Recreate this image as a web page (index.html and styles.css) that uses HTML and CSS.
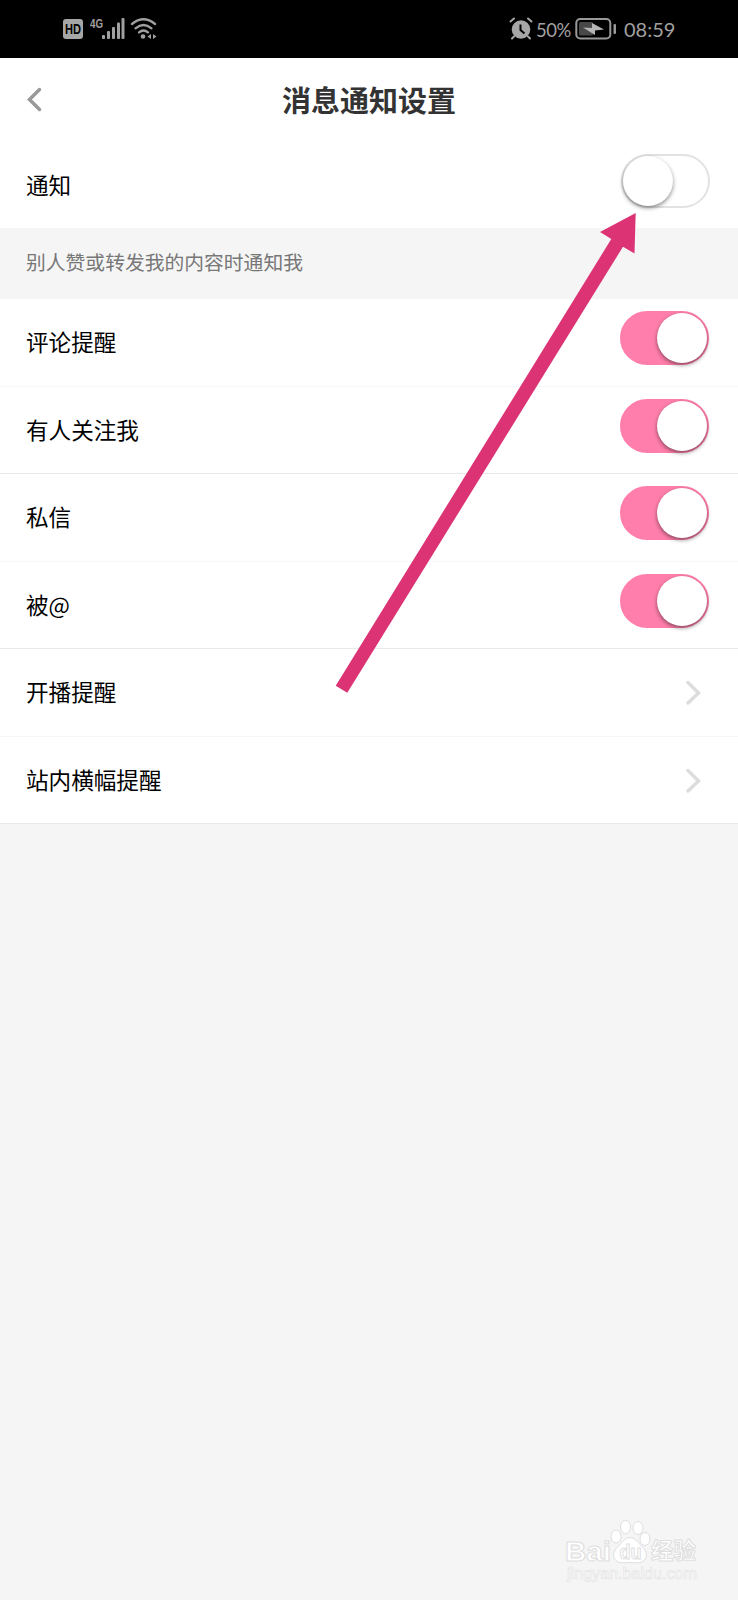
FILE: index.html
```html
<!DOCTYPE html>
<html lang="zh-CN">
<head>
<meta charset="utf-8">
<meta name="viewport" content="width=device-width, initial-scale=1">
<title>消息通知设置</title>
<link rel="stylesheet" href="styles.css">
</head>
<body>

<div class="statusbar">
  <svg class="signal" width="106" height="30" viewBox="60 14 106 30">
    <rect x="63" y="19" width="20" height="20" rx="3" fill="#a6a6a6"/>
    <text x="73" y="34.3" class="hd" text-anchor="middle" textLength="16" lengthAdjust="spacingAndGlyphs">HD</text>
    <text x="90" y="27.5" class="net" textLength="13" lengthAdjust="spacingAndGlyphs">4G</text>
    <g fill="#a0a0a0">
      <rect x="102" y="35" width="3" height="4" rx="1"/>
      <rect x="107" y="31" width="3" height="8" rx="1"/>
      <rect x="112" y="27" width="3" height="12" rx="1"/>
      <rect x="117" y="22.500" width="3" height="16.500" rx="1"/>
      <rect x="121.500" y="18" width="3" height="21" rx="1"/>
      <circle cx="143" cy="36.500" r="2.300"/>
      <path d="M151 34v5l-3.500-2.500zM153 34v5l3.500-2.500z"/>
    </g>
    <g fill="none" stroke="#a0a0a0" stroke-width="2.300" stroke-linecap="round">
      <path d="M132 24Q143.500 14.500 155 24"/>
      <path d="M135.500 28.300Q143.500 21.700 151.500 28.300"/>
      <path d="M139 32.300Q143.500 28.700 148 32.300"/>
    </g>
  </svg>
  <div class="status-right">
    <svg width="24" height="24" viewBox="0 0 24 24">
      <circle cx="12" cy="12.500" r="9.300" fill="#a6a6a6"/>
      <g fill="none" stroke="#a6a6a6" stroke-width="2" stroke-linecap="round">
        <path d="M1.500 4.500L5 1.500M19 1.500l3.500 3M5 19.500l-2 2M19 19.500l2 2"/>
      </g>
      <path d="M11.500 7.500v5.500l4 3.500" fill="none" stroke="#000" stroke-width="2"/>
    </svg>
    <span class="percent">50%</span>
    <svg class="battery" width="42" height="24" viewBox="0 0 42 24">
      <rect x="1.300" y="2" width="34" height="19.500" rx="4" fill="none" stroke="#999" stroke-width="2"/>
      <rect x="4" y="5" width="14" height="13.500" rx="1.500" fill="#484848"/>
      <path d="M8 10.500l9 .5V6l12 6.500-9 1v4.500z" fill="#b5b5b5"/>
      <rect x="38.500" y="7" width="2.500" height="10" rx="1" fill="#999"/>
    </svg>
    <span class="clock">08:59</span>
  </div>
</div>

<div class="header">
  <svg class="back" width="16" height="26" viewBox="0 0 16 26">
    <path d="M13.500 2.500L3.500 12.500l10 10"/>
  </svg>
  <h1>消息通知设置</h1>
</div>

<div class="row first">
  <span>通知</span>
  <div class="switch"></div>
</div>

<div class="hint">别人赞或转发我的内容时通知我</div>

<div class="list">
  <div class="row">
    <span>评论提醒</span>
    <div class="switch on"></div>
  </div>
  <div class="row dark-line">
    <span>有人关注我</span>
    <div class="switch on"></div>
  </div>
  <div class="row">
    <span>私信</span>
    <div class="switch on"></div>
  </div>
  <div class="row dark-line">
    <span>被@</span>
    <div class="switch on"></div>
  </div>
  <div class="row">
    <span>开播提醒</span>
    <svg class="more" width="16" height="26" viewBox="0 0 16 26"><path d="M3 3.500l10.500 10.500L3 24"/></svg>
  </div>
  <div class="row dark-line">
    <span>站内横幅提醒</span>
    <svg class="more" width="16" height="26" viewBox="0 0 16 26"><path d="M3 3.500l10.500 10.500L3 24"/></svg>
  </div>
</div>

<!-- arrow pointing at the first switch -->
<svg class="arrow" width="310" height="490" viewBox="330 208 310 490">
  <path d="M635.700 213L634.500 253.500 623 246.700 347.300 692.800 335.700 685.800 611.300 239 600 232z"/>
</svg>

<svg class="watermark" width="140" height="75" viewBox="560 1515 140 75">
  <text class="bai" x="565" y="1560.500" textLength="46" lengthAdjust="spacingAndGlyphs">Bai</text>
  <g class="paw">
    <ellipse cx="616" cy="1536.500" rx="5" ry="6.500"/>
    <ellipse cx="625.500" cy="1527" rx="5" ry="6.500"/>
    <ellipse cx="638" cy="1528" rx="5" ry="6.500"/>
    <ellipse cx="645" cy="1539" rx="5" ry="6.500"/>
    <path d="M630 1537.500c5 0 8 5 12 9 5 5 6 10 2 14-4 3.500-8 2-14 2s-10 1.500-14-2c-4-4-3-9 2-14 4-4 7-9 12-9z"/>
  </g>
  <text class="du" x="619.500" y="1558.500" textLength="22" lengthAdjust="spacingAndGlyphs">du</text>
  <text class="jy" x="651" y="1559" textLength="45">经验</text>
  <text class="url" x="567" y="1579" textLength="130" lengthAdjust="spacingAndGlyphs">jingyan.baidu.com</text>
</svg>

</body>
</html>
```
FILE: styles.css
```css
* {
  box-sizing: border-box;
}

body {
  margin: 0;
  min-height: 1600px;
  position: relative;
  background: #f5f5f5;
  font-family: "Noto Sans CJK SC", sans-serif;
  color: #000;
}

/* Status bar */
.statusbar {
  height: 58px;
  padding: 0 63px 0 60px;
  background: #000;
  display: flex;
  justify-content: space-between;
  align-items: center;
}

.status-right {
  display: flex;
  align-items: center;
  color: #a0a0a0;
  font-family: Lato, sans-serif;
  font-size: 20px;
  line-height: 24px;
}

.percent {
  width: 36px;
  margin-left: 3px;
  padding-top: 2px;
  font-size: 18.5px;
  letter-spacing: -0.5px;
  white-space: nowrap;
}

.battery {
  margin-left: 3px;
}

.clock {
  width: 51px;
  margin-left: 7px;
}

.hd {
  font: bold 14px "Liberation Sans", sans-serif;
  fill: #000;
}

.net {
  font: bold 12px "Liberation Sans", sans-serif;
  fill: #a0a0a0;
}

/* Title */
.header {
  height: 84px;
  background: #fff;
  display: flex;
  align-items: center;
  padding: 0 26px;
}

.back {
  fill: none;
  stroke: #999;
  stroke-width: 3.5;
  stroke-linecap: round;
}

h1 {
  flex: 1;
  margin: 0 16px 2px 0;
  font-size: 29px;
  line-height: 40px;
  font-weight: 700;
  text-align: center;
  color: #333;
}

/* Rows */
.row {
  height: 87.5px;
  padding: 0 29px 0 26px;
  display: flex;
  align-items: center;
  justify-content: space-between;
  background: #fff;
  border-bottom: 1px solid #f7f7f7;
  font-size: 22.6px;
  line-height: 32px;
}

.row.first {
  height: 86px;
  border-bottom: none;
}

.row.dark-line {
  border-bottom-color: #e9e9e9;
}

.hint {
  height: 71px;
  padding: 0 26px;
  font-size: 19.8px;
  line-height: 67px;
  color: #777;
}

/* Switches */
.switch {
  width: 89px;
  height: 54px;
  margin-bottom: 8px;
  border-radius: 27px;
  border: 2px solid #e2e2e2;
  display: flex;
}

.first .switch {
  margin-bottom: 9px;
  margin-right: -1px;
}

.switch::after {
  content: "";
  width: 50px;
  height: 50px;
  border-radius: 50%;
  background: #fff;
  box-shadow: 0 2px 4px rgba(0, 0, 0, 0.45);
}

.switch.on {
  border-color: #ff7eab;
  background: #ff7eab;
  justify-content: flex-end;
}

.more {
  margin-right: 8px;
  fill: none;
  stroke: #ddd;
  stroke-width: 3.5;
  stroke-linecap: round;
}

/* Overlays */
.arrow {
  position: absolute;
  left: 330px;
  top: 208px;
  fill: #dc3375;
}

.watermark {
  position: absolute;
  left: 560px;
  top: 1515px;
  fill: #fff;
  stroke: #dedede;
  stroke-width: 1;
}

.bai {
  font: bold 28px "Liberation Sans", sans-serif;
}

.du {
  font: bold 20px "Liberation Sans", sans-serif;
}

.jy {
  font: bold 22.5px "Noto Sans CJK SC", sans-serif;
}

.url {
  font: 16px "Liberation Sans", sans-serif;
  stroke: #e2e2e2;
  stroke-width: 0.6;
}
```
